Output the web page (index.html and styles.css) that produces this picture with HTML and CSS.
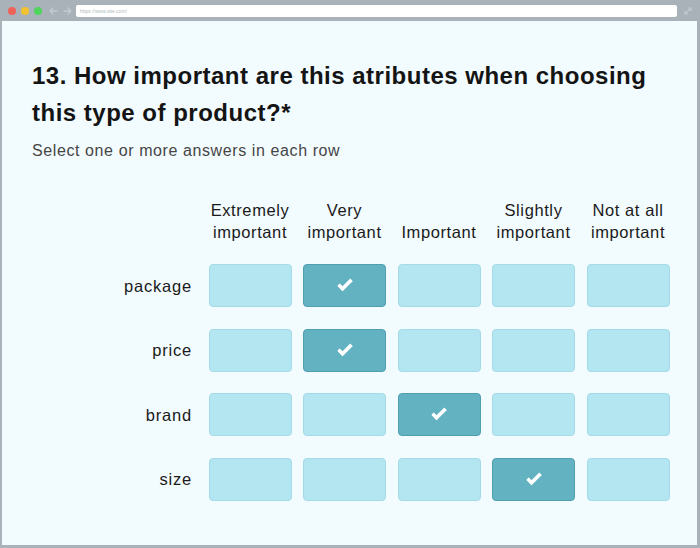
FILE: index.html
```html
<!DOCTYPE html>
<html lang="en">
<head>
<meta charset="utf-8">
<title>Survey question</title>
<link rel="stylesheet" href="styles.css">
</head>
<body>
<div class="window">
  <div class="chrome">
    <span class="dot red"></span>
    <span class="dot yellow"></span>
    <span class="dot green"></span>
    <svg class="nav" width="28" height="10" viewBox="0 0 28 10">
      <path d="M9 5H2M5 2L2 5L5 8" fill="none" stroke="#c3cacf" stroke-width="1.4" stroke-linecap="round" stroke-linejoin="round"/>
      <path d="M16 5H23M20 2L23 5L20 8" fill="none" stroke="#c3cacf" stroke-width="1.4" stroke-linecap="round" stroke-linejoin="round"/>
    </svg>
    <div class="url">https://www.site.com/</div>
    <svg class="expand" width="10" height="10" viewBox="0 0 10 10">
      <path d="M2 8L8 2M5 2H8V5M2 5V8H5" fill="none" stroke="#c3cacf" stroke-width="1.2"/>
    </svg>
  </div>
  <div class="content">
    <h1 class="title">13. How important are this atributes when choosing this type of product?*</h1>
    <p class="hint">Select one or more answers in each row</p>
    <div class="matrix">
      <div class="corner"></div>
      <div class="head">Extremely important</div>
      <div class="head">Very important</div>
      <div class="head">Important</div>
      <div class="head">Slightly important</div>
      <div class="head">Not at all important</div>

      <div class="label">package</div>
      <div class="cell"></div>
      <div class="cell on"><span class="check"></span></div>
      <div class="cell"></div>
      <div class="cell"></div>
      <div class="cell"></div>

      <div class="label">price</div>
      <div class="cell"></div>
      <div class="cell on"><span class="check"></span></div>
      <div class="cell"></div>
      <div class="cell"></div>
      <div class="cell"></div>

      <div class="label">brand</div>
      <div class="cell"></div>
      <div class="cell"></div>
      <div class="cell on"><span class="check"></span></div>
      <div class="cell"></div>
      <div class="cell"></div>

      <div class="label">size</div>
      <div class="cell"></div>
      <div class="cell"></div>
      <div class="cell"></div>
      <div class="cell on"><span class="check"></span></div>
      <div class="cell"></div>
    </div>
  </div>
</div>
</body>
</html>
```

FILE: styles.css
```css
* { box-sizing: border-box; }
html, body { margin: 0; padding: 0; }
body {
  width: 700px;
  height: 548px;
  background: #a9b2b8;
  font-family: "Liberation Sans", Arial, sans-serif;
  overflow: hidden;
}
.window {
  width: 700px;
  height: 548px;
  background: #a9b2b8;
  padding: 0 3px 3px 2px;
  display: flex;
  flex-direction: column;
}
.chrome {
  height: 21px;
  display: flex;
  align-items: center;
  padding-left: 6px;
  flex: none;
}
.dot {
  width: 8px;
  height: 8px;
  border-radius: 50%;
  margin-right: 5px;
}
.red { background: #ef6259; }
.yellow { background: #f2c230; }
.green { background: #4fd45c; }
.nav { margin-left: 1px; margin-right: 0; }
.url {
  margin-left: 0;
  width: 601px;
  height: 12px;
  background: #fff;
  border-radius: 2px;
  font-size: 5px;
  line-height: 12px;
  color: #b4bbc0;
  padding-left: 4px;
}
.expand { margin-left: 6px; }
.content {
  flex: 1;
  background: #f2fbfe;
  padding: 37px 0 0 30px;
}
.title {
  margin: 0;
  width: 660px;
  font-size: 24px;
  line-height: 36.5px;
  font-weight: 600;
  color: #141414;
  letter-spacing: 0.5px;
}
.hint {
  margin: 9px 0 0;
  font-size: 16px;
  line-height: 22px;
  color: #464646;
  letter-spacing: 0.6px;
}
.matrix {
  margin-top: 37px;
  display: grid;
  grid-template-columns: 165px repeat(5, 83px);
  grid-template-rows: 44px repeat(4, 43px);
  column-gap: 11.5px;
  row-gap: 21.4px;
}
.head {
  align-self: end;
  text-align: center;
  font-size: 16.5px;
  line-height: 22px;
  color: #1a1a1a;
  letter-spacing: 0.6px;
  margin: 0 -6px;
}
.label {
  align-self: center;
  text-align: right;
  padding-right: 5px;
  font-size: 16.5px;
  line-height: 22px;
  color: #1a1a1a;
  letter-spacing: 0.8px;
}
.cell {
  background: #b3e6f1;
  border: 1px solid #a3dbe8;
  border-radius: 4px;
  display: flex;
  align-items: center;
  justify-content: center;
}
.cell.on {
  background: #62b2c2;
  border-color: #4f9fb0;
}
.check {
  width: 8px;
  height: 15px;
  border: solid #fff;
  border-width: 0 4px 4px 0;
  border-radius: 1px;
  transform: translate(0, -2px) rotate(45deg);
  transform-origin: center;
}
```
